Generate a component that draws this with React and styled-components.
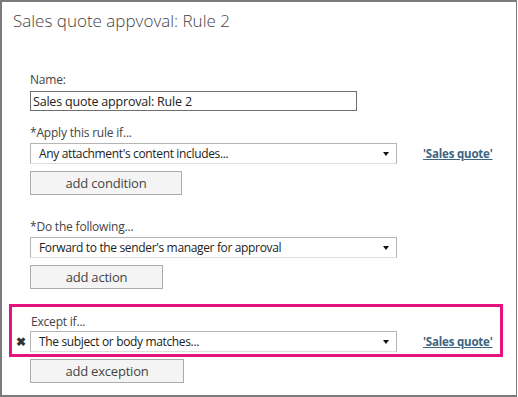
import React from 'react';
import styled, { createGlobalStyle } from 'styled-components';

const GlobalStyle = createGlobalStyle`
  body {
    margin: 0;
    background: #ffffff;
    font-family: "Open Sans", "Noto Sans", sans-serif;
    color: #444444;
  }
`;

const Frame = styled.div`
  box-sizing: border-box;
  width: 517px;
  height: 397px;
  border: 2px solid #7b7b7b;
  border-right-width: 1px;
  background: #ffffff;
  display: flex;
  flex-direction: column;
`;

const Title = styled.h1`
  margin: 7px 0 0 11px;
  font-size: 17px;
  line-height: 24px;
  font-weight: 300;
  color: #444444;
`;

const Body = styled.div`
  display: flex;
  flex-direction: column;
  padding-left: 28px;
  margin-top: 39px;
`;

const Label = styled.div`
  font-size: 12px;
  line-height: 16px;
  color: #444444;
  letter-spacing: -0.2px;
  margin-top: ${p => p.$top || 0}px;
`;

const TextInput = styled.input`
  box-sizing: border-box;
  width: 327px;
  height: 20px;
  margin-top: 3px;
  padding: 0 2px;
  border: 1px solid #6e6e6e;
  font-family: inherit;
  font-size: 12.5px;
  letter-spacing: -0.2px;
  color: #222222;
  outline: none;
`;

const Row = styled.div`
  display: flex;
  align-items: center;
  margin-top: ${p => p.$top || 0}px;
`;

const Select = styled.div`
  box-sizing: border-box;
  width: 367px;
  height: 21px;
  display: flex;
  align-items: center;
  justify-content: space-between;
  padding: 0 7px 0 8px;
  border: 1px solid #b5b5b5;
  border-bottom-color: #dedede;
  font-size: 12px;
  letter-spacing: -0.35px;
  color: #222222;
`;

const Arrow = styled.span`
  width: 0;
  height: 0;
  border-left: 3.5px solid transparent;
  border-right: 3.5px solid transparent;
  border-top: 4px solid #111111;
  margin-top: 1px;
`;

const ValueLink = styled.a`
  margin-left: 26px;
  font-size: 11.5px;
  font-weight: 700;
  letter-spacing: -0.2px;
  color: #3d6482;
  text-decoration: underline;
  cursor: pointer;
`;

const Button = styled.button`
  box-sizing: border-box;
  width: ${p => p.$width}px;
  height: 24px;
  margin-top: ${p => p.$top || 7}px;
  border: 1px solid #ababab;
  background: #f4f4f4;
  font-family: inherit;
  font-size: 13px;
  letter-spacing: -0.2px;
  color: #444444;
  padding: 0;
`;

const Highlight = styled.div`
  box-sizing: border-box;
  width: 494px;
  height: 53px;
  margin: 15px 0 0 -21px;
  border: 3px solid #e6127f;
  padding: 7px 0 0 4px;
  display: flex;
  flex-direction: column;
`;

const ExceptLabel = styled(Label)`
  margin-left: 15px;
`;

const RemoveMark = styled.span`
  width: 7px;
  margin-right: 7px;
  font-size: 12px;
  font-weight: 700;
  line-height: 12px;
  color: #333333;
`;

const RuleSelect = ({ text, link }) => (
  <>
    <Select>
      <span>{text}</span>
      <Arrow />
    </Select>
    {link && <ValueLink>'Sales quote'</ValueLink>}
  </>
);

export default function App() {
  return (
    <>
      <GlobalStyle />
      <Frame>
        <Title>Sales quote appvoval: Rule 2</Title>
        <Body>
          <Label>Name:</Label>
          <TextInput defaultValue="Sales quote approval: Rule 2" />

          <Label $top={14}>*Apply this rule if...</Label>
          <Row $top={2}>
            <RuleSelect text="Any attachment's content includes..." link />
          </Row>
          <Button $width={152}>add condition</Button>

          <Label $top={24}>*Do the following...</Label>
          <Row $top={2}>
            <RuleSelect text="Forward to the sender's manager for approval" />
          </Row>
          <Button $width={133}>add action</Button>

          <Highlight>
            <ExceptLabel>Except if...</ExceptLabel>
            <Row $top={1}>
              <RemoveMark>✖</RemoveMark>
              <RuleSelect text="The subject or body matches..." link />
            </Row>
          </Highlight>
          <Button $width={154} $top={2}>add exception</Button>
        </Body>
      </Frame>
    </>
  );
}
